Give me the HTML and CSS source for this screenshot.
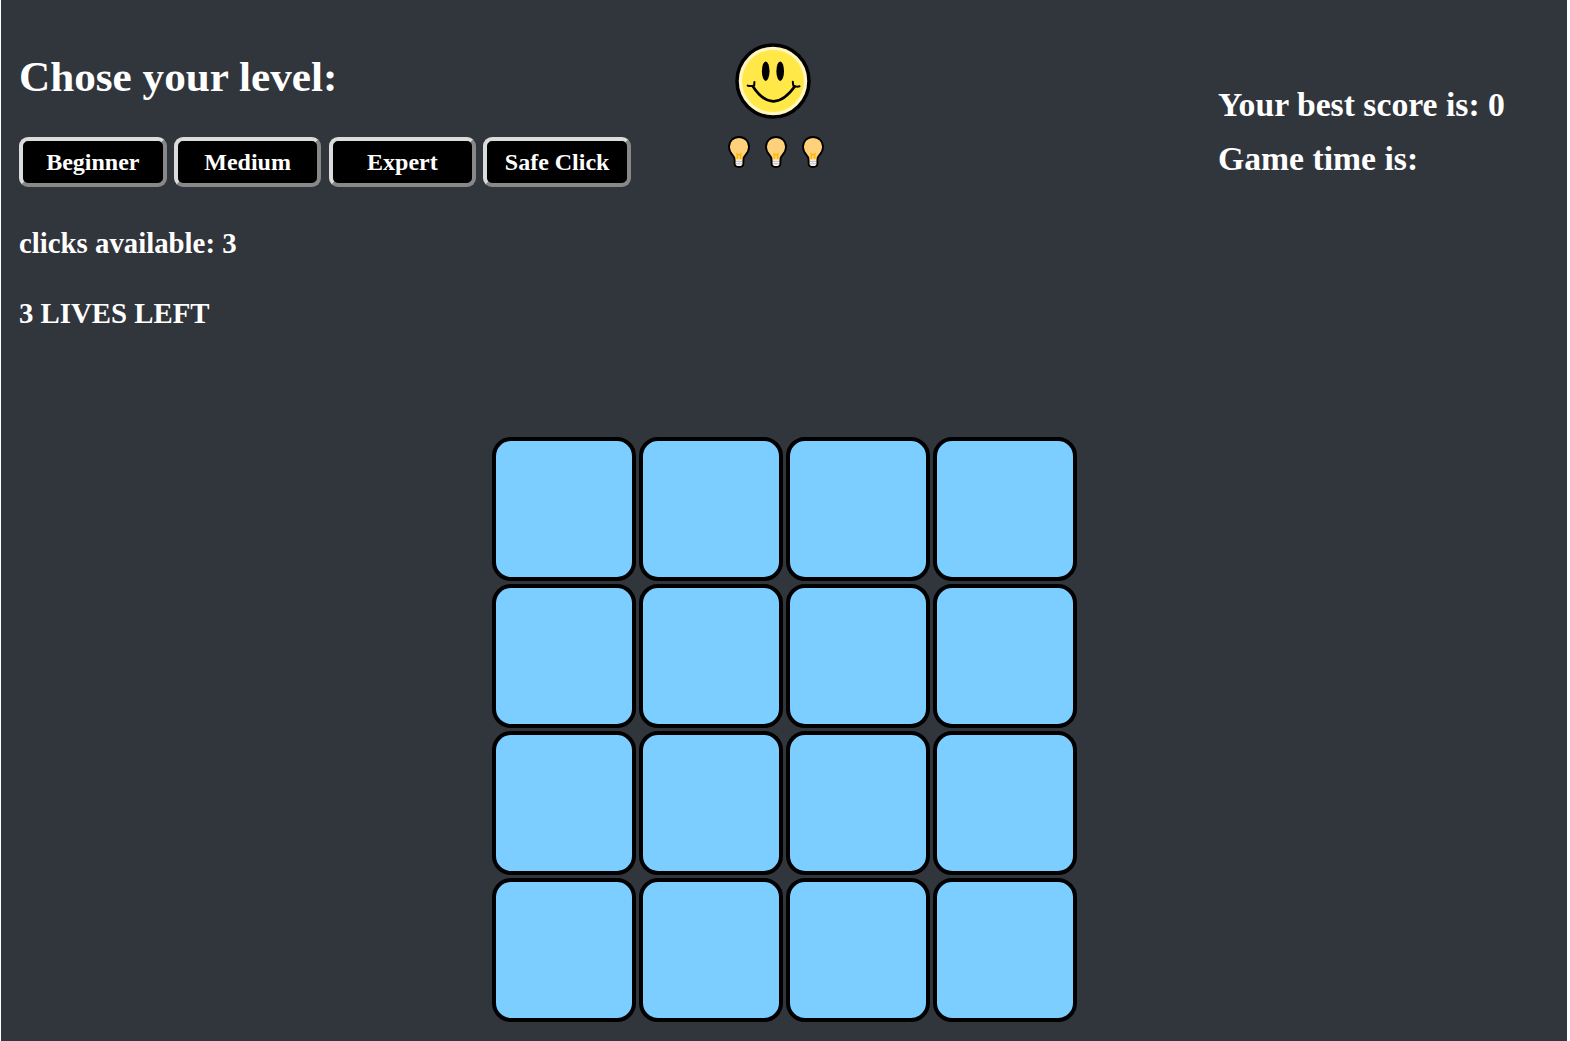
FILE: index.html
```html
<!DOCTYPE html>
<html lang="en">
<head>
<meta charset="utf-8">
<title>Minesweeper</title>
<link rel="stylesheet" href="styles.css">
</head>
<body>
<svg class="defs" width="0" height="0" aria-hidden="true">
  <symbol id="bulb" viewBox="0 0 22 32">
    <path d="M11 1C5 1 1 5.200 1 11c0 4.800 2.600 7 4.700 9.600.8 1 .9 2 .9 4v2.900c0 2.300 1.700 3.500 4.400 3.500s4.400-1.200 4.400-3.500v-2.900c0-2 .1-3 .9-4C18.400 18 21 15.800 21 11 21 5.200 17 1 11 1z" fill="#ffd17a" stroke="#000" stroke-width="1.800"/>
    <path d="M9.300 23v-5.200H8.300M12.700 23v-5.200h1M9 18.700h4" fill="none" stroke="#ffb900" stroke-width="1.500"/>
    <path d="M8 23.500h6v4.800l-1.500 1.700h-3L8 28.300z" fill="#f0f0f5"/>
    <path d="M8 25.400h6M8 27.700h6" stroke="#aaaab8" stroke-width=".7"/>
  </symbol>
</svg>
<main class="game">
  <header class="top">
    <section class="levels">
      <h1 class="title">Chose your level:</h1>
      <div class="buttons">
        <button class="btn">Beginner</button>
        <button class="btn">Medium</button>
        <button class="btn">Expert</button>
        <button class="btn">Safe Click</button>
      </div>
      <p class="info">clicks available: 3</p>
      <p class="info">3 LIVES LEFT</p>
    </section>
    <section class="status">
      <svg class="smiley" viewBox="0 0 76 76">
        <circle cx="38" cy="38" r="36" fill="#fff6c0" stroke="#000" stroke-width="3.500"/>
        <circle cx="38" cy="38" r="31" fill="#ffe848"/>
        <ellipse cx="30.700" cy="28.200" rx="3.800" ry="9.700"/>
        <ellipse cx="45.200" cy="28.200" rx="3.800" ry="9.700"/>
        <path d="M17.300 42.500C24 53 31 58.300 38.500 58.300S53 53 60.500 42.500" fill="none" stroke="#000" stroke-width="2.700"/>
        <path d="M12.700 42.600q3 1 6.500-.2l.2-3.500M64.500 43.300q-3 1-6.200-.6l-.5-3.900" fill="none" stroke="#000" stroke-width="2" stroke-linecap="round"/>
      </svg>
      <div class="hints">
        <svg class="bulb"><use href="#bulb"/></svg>
        <svg class="bulb"><use href="#bulb"/></svg>
        <svg class="bulb"><use href="#bulb"/></svg>
      </div>
    </section>
    <section class="score">
      <p class="score-line">Your best score is: 0</p>
      <p class="score-line">Game time is:</p>
    </section>
  </header>
  <div class="board">
    <div class="cell"></div><div class="cell"></div><div class="cell"></div><div class="cell"></div>
    <div class="cell"></div><div class="cell"></div><div class="cell"></div><div class="cell"></div>
    <div class="cell"></div><div class="cell"></div><div class="cell"></div><div class="cell"></div>
    <div class="cell"></div><div class="cell"></div><div class="cell"></div><div class="cell"></div>
  </div>
</main>
</body>
</html>
```
FILE: styles.css
```css
* { box-sizing: border-box; }
html { background: #fff; }
body {
  margin: 0;
  height: 1041px;
  overflow: hidden;
  font-family: "Liberation Serif", "Times New Roman", serif;
  font-weight: bold;
  color: #fff;
}
.defs { display: none; }
.game {
  height: 1041px;
  margin: 0 3px 0 1px;
  background: #31353c;
}
.top {
  display: grid;
  grid-template-columns: 708px 491px 1fr;
  height: 437px;
  padding-left: 18px;
}
.levels { padding-top: 52px; }
.title {
  margin: 0 0 35px;
  font-size: 43.2px;
  line-height: 50px;
}
.buttons {
  display: flex;
  gap: 7.2px;
  margin-bottom: 39.5px;
}
.btn {
  width: 147.6px;
  height: 50px;
  padding: 0;
  border: 4px solid;
  border-color: #dcdcdc #888 #888 #dcdcdc;
  border-radius: 9px;
  background: #000;
  color: #fff;
  font: bold 24px "Liberation Serif", "Times New Roman", serif;
}
.info {
  margin: 0 0 38.5px;
  font-size: 28.8px;
  line-height: 32px;
}
.status { padding-top: 43.4px; }
.smiley {
  display: block;
  width: 76px;
  height: 76px;
  margin-left: 8px;
}
.hints {
  display: flex;
  gap: 15px;
  padding: 16.4px 0 0 1px;
}
.bulb { width: 22px; height: 32px; }
.score { padding-top: 78px; }
.score-line {
  margin: 0;
  font-size: 33.7px;
  line-height: 54px;
}
.board {
  display: grid;
  grid-template-columns: repeat(4, 144px);
  grid-auto-rows: 144px;
  gap: 3px;
  margin-left: 491px;
}
.cell {
  border: 4px solid #000;
  border-radius: 19px;
  background: #7bceff;
}
```
